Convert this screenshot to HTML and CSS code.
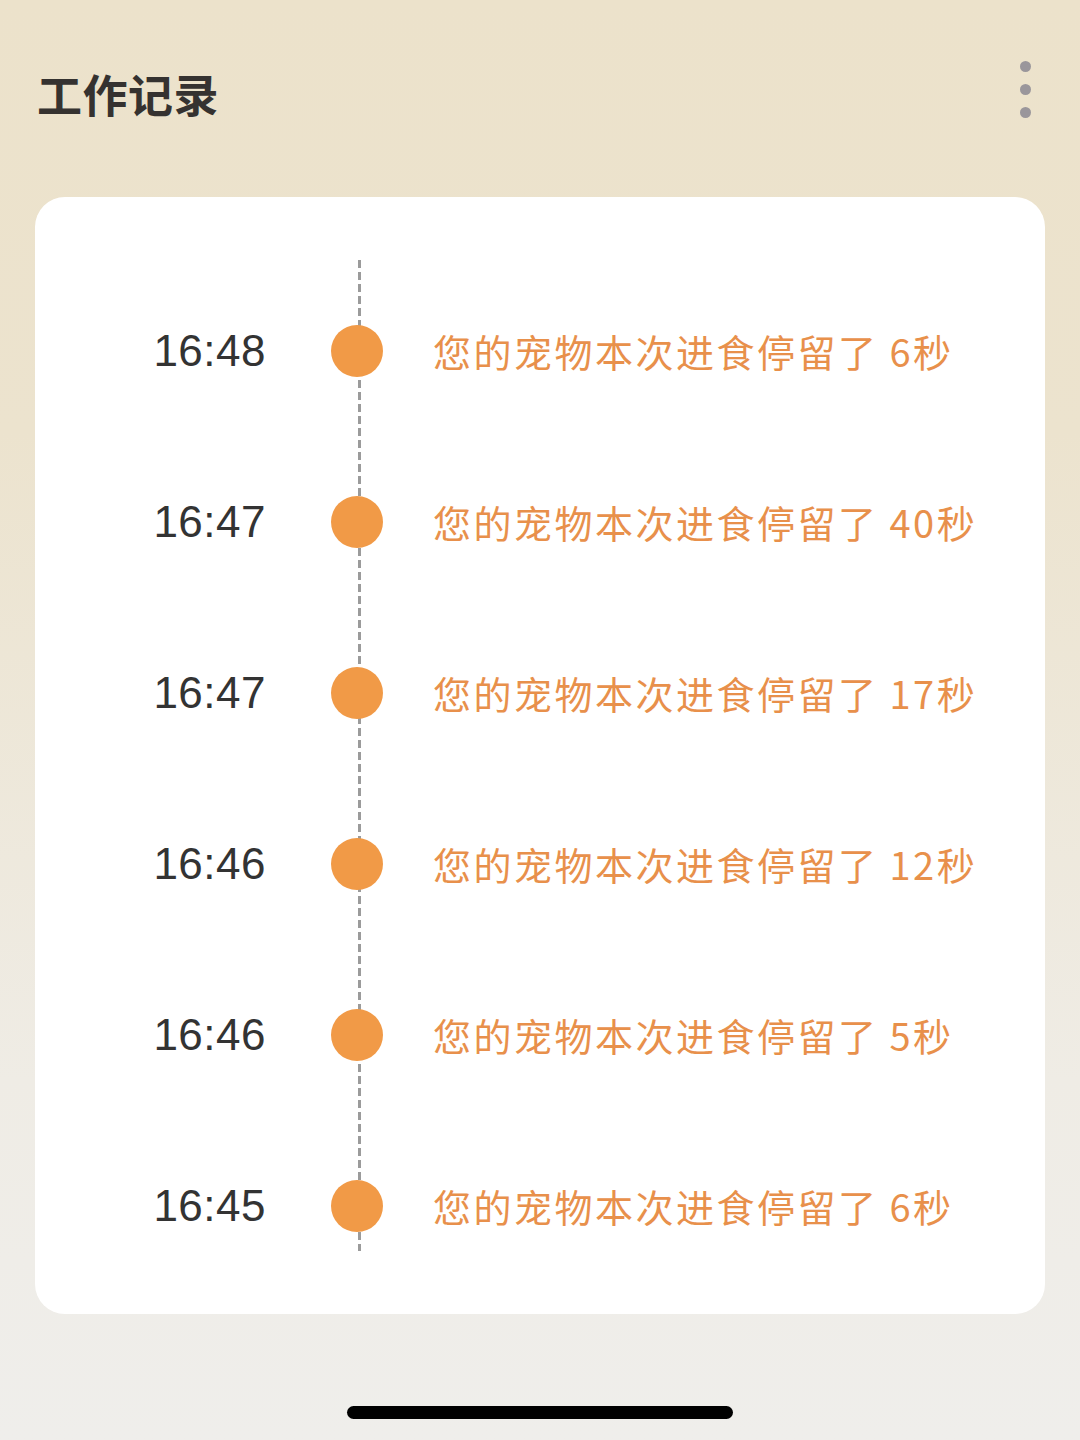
FILE: index.html
```html
<!DOCTYPE html>
<html lang="zh-CN">
<head>
    <meta charset="UTF-8">
    <meta name="viewport" content="width=device-width, initial-scale=1.0">
    <title>工作记录</title>
    <link rel="stylesheet" href="styles.css">
</head>
<body>
    <div class="page">
        <header class="top-bar">
            <h1>工作记录</h1>
            <div class="more">
                <span></span><span></span><span></span>
            </div>
        </header>

        <div class="card">
            <ul class="timeline">
                <li class="row">
                    <span class="time">16:48</span>
                    <span class="dot"></span>
                    <span class="msg">您的宠物本次进食停留了 6秒</span>
                </li>
                <li class="row">
                    <span class="time">16:47</span>
                    <span class="dot"></span>
                    <span class="msg">您的宠物本次进食停留了 40秒</span>
                </li>
                <li class="row">
                    <span class="time">16:47</span>
                    <span class="dot"></span>
                    <span class="msg">您的宠物本次进食停留了 17秒</span>
                </li>
                <li class="row">
                    <span class="time">16:46</span>
                    <span class="dot"></span>
                    <span class="msg">您的宠物本次进食停留了 12秒</span>
                </li>
                <li class="row">
                    <span class="time">16:46</span>
                    <span class="dot"></span>
                    <span class="msg">您的宠物本次进食停留了 5秒</span>
                </li>
                <li class="row">
                    <span class="time">16:45</span>
                    <span class="dot"></span>
                    <span class="msg">您的宠物本次进食停留了 6秒</span>
                </li>
            </ul>
        </div>

        <div class="home-bar"></div>
    </div>
</body>
</html>
```

FILE: styles.css
```css
* {
    box-sizing: border-box;
}
body {
    margin: 0;
    background: linear-gradient(#ece2cb 0%, #ece3ce 30%, #efece5 75%, #efeeeb 100%);
    font-family: "Noto Sans CJK SC", "Noto Sans", sans-serif;
    min-height: 1440px;
}
.page {
    display: flex;
    flex-direction: column;
    height: 1440px;
    padding: 0 35px;
}
.top-bar {
    display: flex;
    justify-content: space-between;
    align-items: center;
    height: 197px;
    padding-bottom: 10px;
}
h1 {
    margin: 0;
    padding-left: 2px;
    font-size: 45px;
    font-weight: 700;
    color: #353230;
    letter-spacing: 0.5px;
}
.more {
    display: flex;
    flex-direction: column;
    gap: 12px;
    margin-right: 14px;
    margin-top: -8px;
}
.more span {
    width: 11px;
    height: 11px;
    border-radius: 50%;
    background: #9a969b;
}
.card {
    background: #fff;
    border-radius: 30px;
    padding: 63px 0 23px;
}
.timeline {
    list-style: none;
    margin: 0;
    padding: 5px 0 0;
    position: relative;
}
.timeline::before {
    content: "";
    position: absolute;
    left: 323px;
    top: 0;
    bottom: 40px;
    width: 3px;
    background: repeating-linear-gradient(#9b9b9b 0 8px, transparent 8px 12px);
}
.row {
    display: grid;
    grid-template-columns: 231px 52px 1fr;
    column-gap: 65px;
    align-items: center;
    height: 171px;
}
.row .dot {
    margin-left: 0;
}
.time {
    text-align: right;
    font-family: "Liberation Sans", Arial, sans-serif;
    font-size: 44px;
    color: #333;
    letter-spacing: 0.5px;
}
.dot {
    width: 52px;
    height: 52px;
    border-radius: 50%;
    background: #f19a47;
    position: relative;
}
.msg {
    margin-left: -15px;
    font-size: 38px;
    color: #e8904b;
    letter-spacing: 2.5px;
    white-space: nowrap;
}
.home-bar {
    width: 386px;
    height: 13px;
    border-radius: 7px;
    background: #000;
    margin: auto auto 21px;
}
```
